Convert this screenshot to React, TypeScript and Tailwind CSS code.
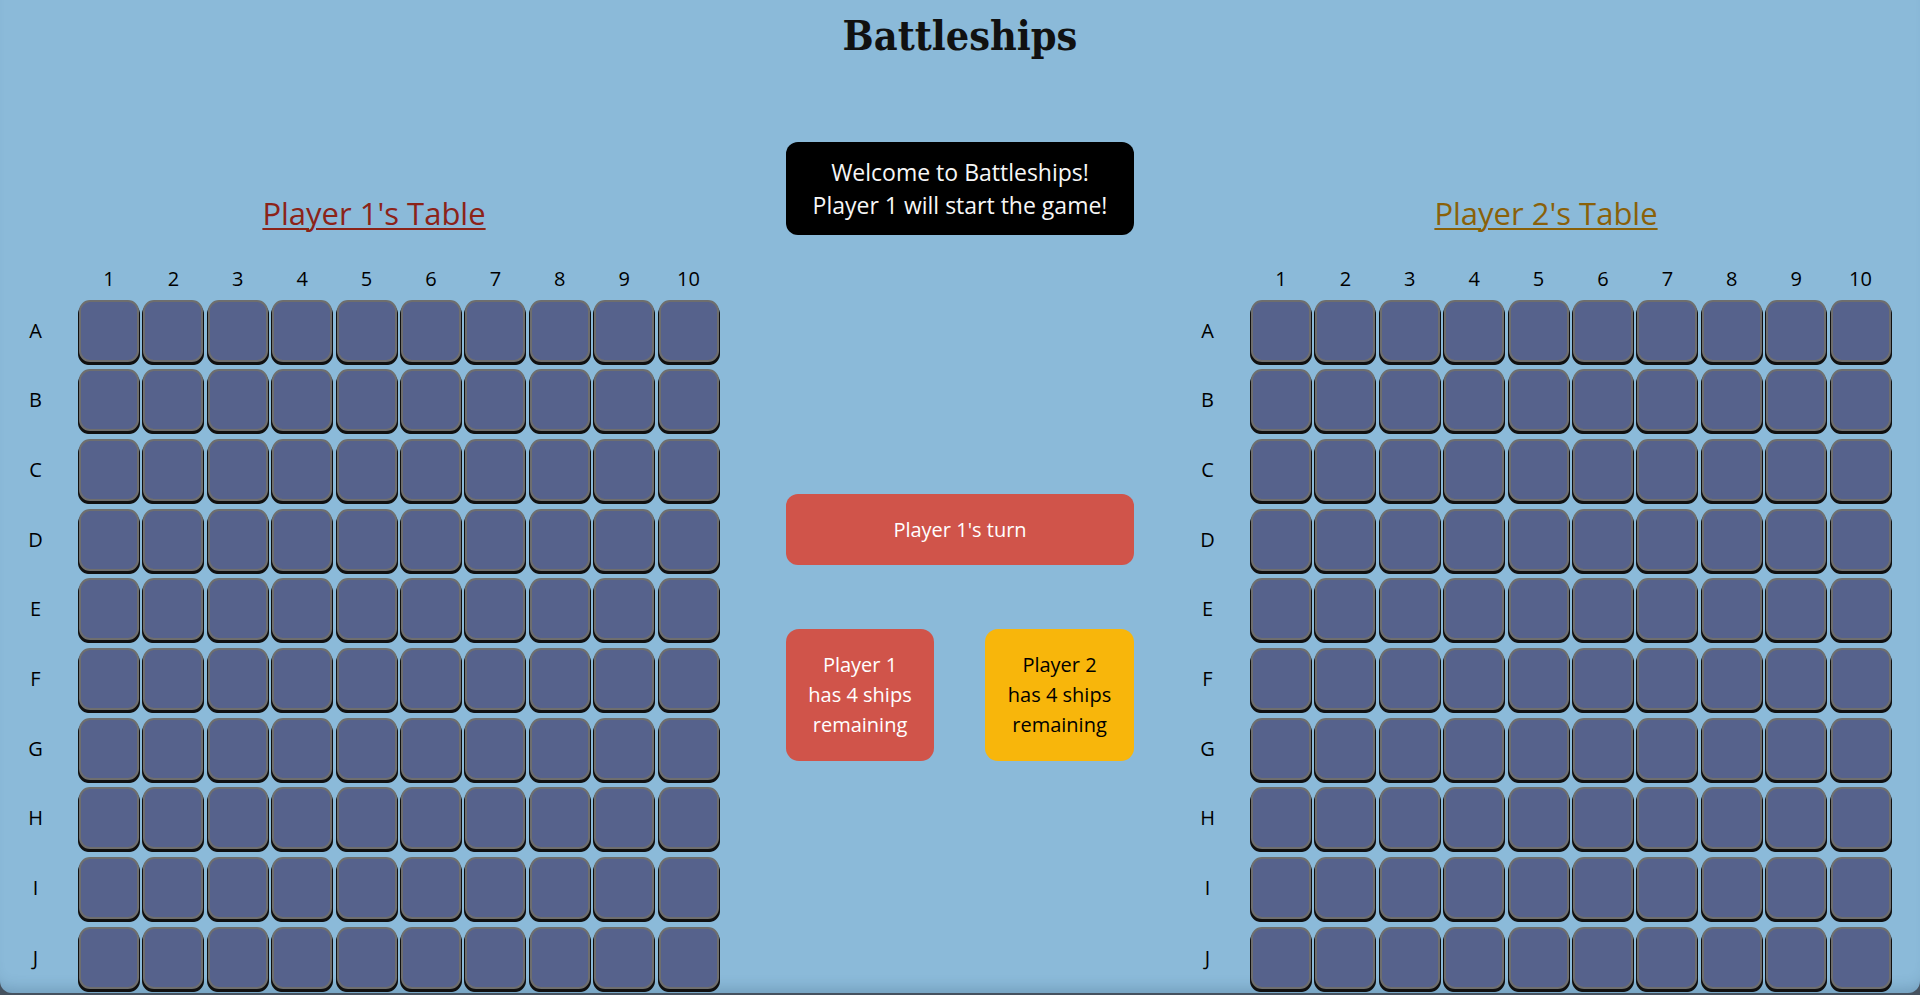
import React from "react";

const ROWS = ["A", "B", "C", "D", "E", "F", "G", "H", "I", "J"];
const COLS = [1, 2, 3, 4, 5, 6, 7, 8, 9, 10];

function Board({ title, titleClass }: { title: string; titleClass: string }) {
  return (
    <section className="w-[748px] shrink-0 pt-[126px]">
      <h2
        className={
          "text-center text-[31px] leading-[44px] underline decoration-[2px] underline-offset-[3px] " +
          titleClass
        }
      >
        {title}
      </h2>
      <div className="mt-[30px] flex flex-col">
        <div className="ml-[79px] flex h-[28px] gap-x-[4.4px]">
          {COLS.map((c) => (
            <div key={c} className="w-[60px] shrink-0 text-center text-[20px] leading-[28px] text-black">
              {c}
            </div>
          ))}
        </div>
        <div className="mt-[6.6px] flex flex-col gap-y-[7.7px]">
          {ROWS.map((r) => (
            <div key={r} className="flex items-center">
              <div className="mr-[8px] w-[71px] shrink-0 text-center text-[20px] leading-[28px] text-black">
                {r}
              </div>
              <div className="flex gap-x-[4.4px]">
                {COLS.map((c) => (
                  <div
                    key={c}
                    className="h-[62px] w-[60px] shrink-0 rounded-[11px] border-2 border-[#6e6e6e] bg-[#56628c] shadow-[-1px_3px_0_#101010,1px_3px_0_#101010]"
                  />
                ))}
              </div>
            </div>
          ))}
        </div>
      </div>
    </section>
  );
}

export default function App() {
  return (
    <div className="h-[995px] w-full overflow-hidden bg-[#46525f] font-['Open_Sans',sans-serif]">
      <div className="h-[993px] w-full overflow-hidden rounded-b-[12px] bg-[#8bbad9] shadow-[inset_0_-14px_14px_-10px_rgba(40,70,100,0.25)]">
        <h1 className="h-[65px] pt-[7px] text-center font-['DejaVu_Serif_Condensed','DejaVu_Serif',serif] text-[41px] font-bold leading-[58px] text-[#111]">
          Battleships
        </h1>
        <div className="flex">
          <Board title="Player 1's Table" titleClass="text-[#8c2318]" />
          <div className="flex w-[424px] shrink-0 flex-col items-center">
            <div className="mt-[77px] w-[348px] rounded-[12px] bg-black py-[13.5px] text-center text-[23px] leading-[33px] text-[#f7f7f7]">
              <div>Welcome to Battleships!</div>
              <div>Player 1 will start the game!</div>
            </div>
            <div className="mt-[259px] flex h-[71px] w-[348px] items-center justify-center rounded-[12px] bg-[#d0544a] text-[20px] text-white">
              Player 1's turn
            </div>
            <div className="mt-[64px] flex w-[348px] justify-between">
              <div className="flex h-[132px] w-[148px] flex-col items-center justify-center rounded-[13px] bg-[#d0544a] text-center text-[20px] leading-[30px] text-white">
                <div>Player 1</div>
                <div>has 4 ships</div>
                <div>remaining</div>
              </div>
              <div className="flex h-[132px] w-[149px] flex-col items-center justify-center rounded-[13px] bg-[#f8b60b] text-center text-[20px] leading-[30px] text-black">
                <div>Player 2</div>
                <div>has 4 ships</div>
                <div>remaining</div>
              </div>
            </div>
          </div>
          <Board title="Player 2's Table" titleClass="text-[#8a6109]" />
        </div>
      </div>
    </div>
  );
}
